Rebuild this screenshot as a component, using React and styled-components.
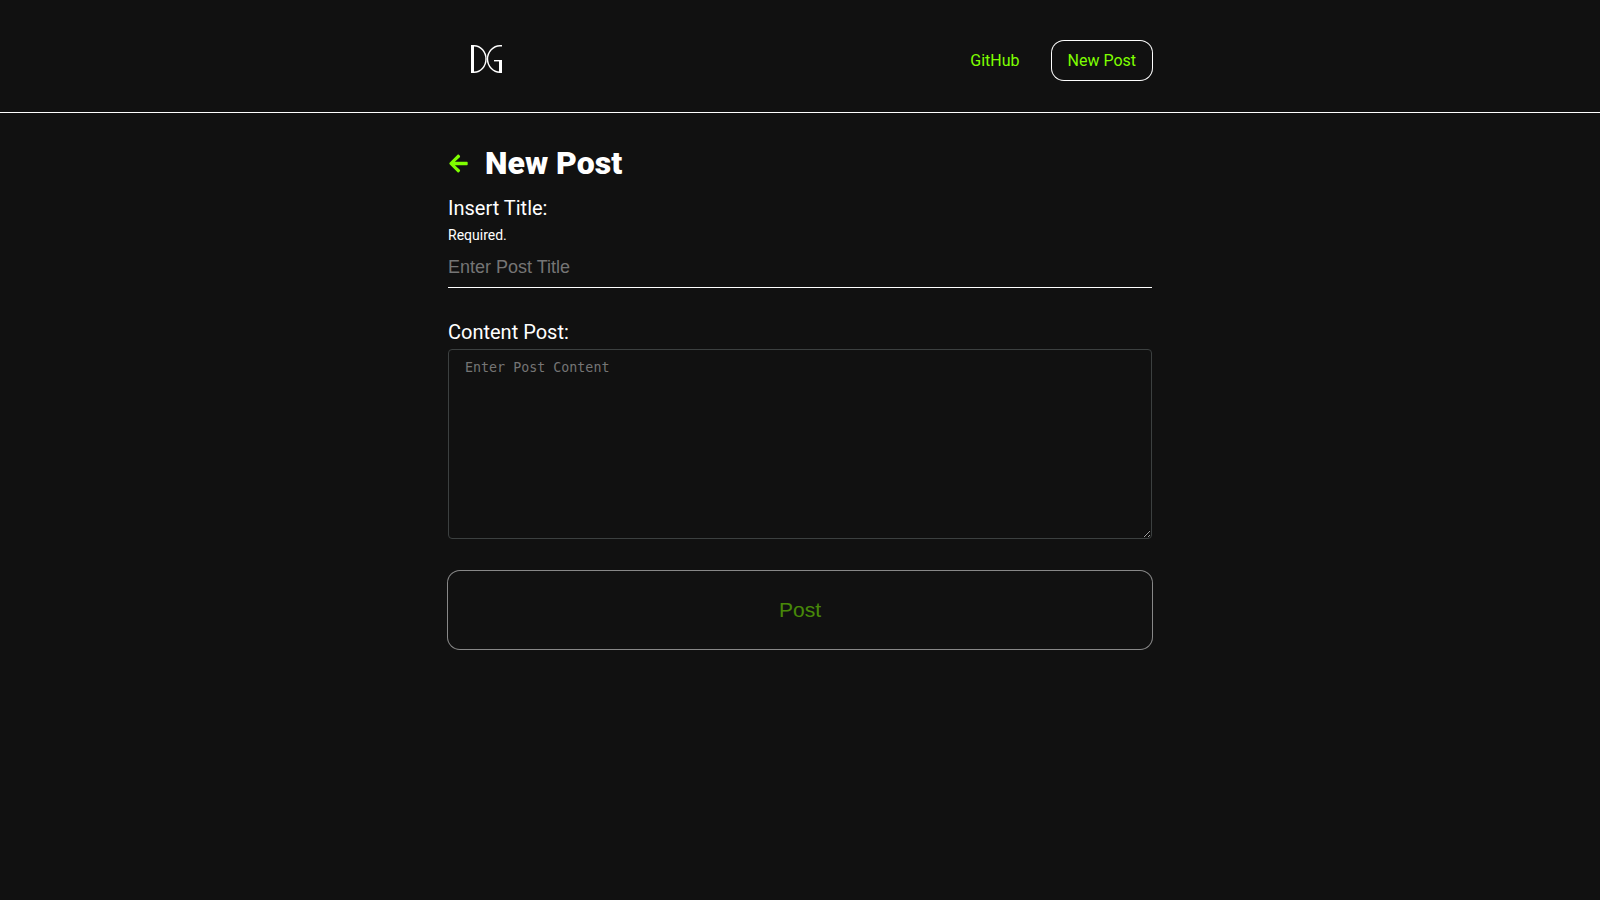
import React from 'react';
import styled, { createGlobalStyle, css } from 'styled-components';
import { FaArrowLeft } from 'react-icons/fa';

const GlobalStyle = createGlobalStyle`
  *, *::before, *::after { box-sizing: border-box; }
  body {
    margin: 0;
    background: #111;
    color: #fff;
    font-family: Roboto, sans-serif;
    font-size: 16px;
  }
`;

const ringed = css`
  border-radius: 12px;
  box-shadow: 0 0 0 1px #fff;
`;

const Header = styled.header`
  padding: 32px 16px;
  border-bottom: 1px solid #fff;
`;

const Container = styled.div`
  width: 100%;
  max-width: 704px;
  margin: 0 auto;
`;

const HeaderRow = styled(Container)`
  display: flex;
  align-items: flex-end;
  justify-content: space-between;
  height: 48px;
  padding-left: 23px;
`;

const LogoLink = styled.a`
  display: block;
  height: 36px;
  color: #fff;
`;

const Nav = styled.nav`
  display: flex;
  align-items: center;
  gap: 32px;
`;

const NavLink = styled.a`
  color: chartreuse;
  line-height: 39px;
  text-decoration: none;
  ${(p) => p.$pill && css`
    padding: 0 16px;
    ${ringed}
  `}
`;

const Main = styled.main`
  padding: 32px 16px;
`;

const TitleRow = styled.div`
  display: flex;
  align-items: center;
  gap: 16px;
  height: 36px;
`;

const BackLink = styled.a`
  display: flex;
  color: chartreuse;
  font-size: 21px;
`;

const Title = styled.h1`
  margin: 0;
  font-size: 32px;
  font-weight: 900;
  line-height: 36px;
`;

const Form = styled.form`
  display: flex;
  flex-direction: column;
  margin-top: 15px;
`;

const Field = styled.div`
  display: flex;
  flex-direction: column;
  margin-bottom: 32px;
`;

const Label = styled.label`
  font-size: 20px;
  line-height: 25px;
  margin-bottom: 4px;
`;

const Hint = styled.small`
  font-size: 14px;
  line-height: 20px;
`;

const TitleInput = styled.input`
  height: 43px;
  padding: 2px 0 0;
  border: 0;
  border-bottom: 1px solid #fff;
  background: transparent;
  color: #fff;
  font: 18px "Liberation Sans", Arial, sans-serif;
  &::placeholder { color: #757575; }
`;

const ContentInput = styled.textarea`
  height: 190px;
  padding: 10px 16px;
  border: 1px solid #3c4040;
  border-radius: 4px;
  background: transparent;
  color: #fff;
  font-family: "DejaVu Sans Mono", monospace;
  resize: vertical;
  &::placeholder { color: #757575; }
`;

const SubmitButton = styled.button`
  height: 78px;
  border: 0;
  background: transparent;
  color: chartreuse;
  font: 21px "Liberation Sans", Arial, sans-serif;
  ${ringed}
  &:disabled { opacity: 0.5; }
`;

function Logo() {
  return (
    <svg width="32" height="30" viewBox="0 0 32 30" fill="none" stroke="currentColor" aria-hidden="true">
      <path d="M1.5 1v28" strokeWidth="3" />
      <path d="M1 1.7h2C10 1.7 15 8 15 15S10 28.3 3 28.3H1" strokeWidth="1.4" />
      <path d="M31 1.7h-2C22 1.7 16.5 8 16.5 15S22 28.3 29 28.3h2" strokeWidth="1.4" />
      <path d="M23 16.7h8" strokeWidth="1.4" />
      <path d="M29.5 16v13" strokeWidth="3" />
    </svg>
  );
}

export default function App() {
  return (
    <>
      <GlobalStyle />
      <Header>
        <HeaderRow>
          <LogoLink href="#" aria-label="DG home"><Logo /></LogoLink>
          <Nav>
            <NavLink href="#github">GitHub</NavLink>
            <NavLink href="#new" $pill>New Post</NavLink>
          </Nav>
        </HeaderRow>
      </Header>
      <Main>
        <Container>
          <TitleRow>
            <BackLink href="#" aria-label="Back"><FaArrowLeft /></BackLink>
            <Title>New Post</Title>
          </TitleRow>
          <Form>
            <Field>
              <Label htmlFor="title">Insert Title:</Label>
              <Hint id="title-hint">Required.</Hint>
              <TitleInput id="title" aria-describedby="title-hint" placeholder="Enter Post Title" />
            </Field>
            <Field>
              <Label htmlFor="content">Content Post:</Label>
              <ContentInput id="content" placeholder="Enter Post Content" />
            </Field>
            <SubmitButton type="submit" disabled>Post</SubmitButton>
          </Form>
        </Container>
      </Main>
    </>
  );
}
